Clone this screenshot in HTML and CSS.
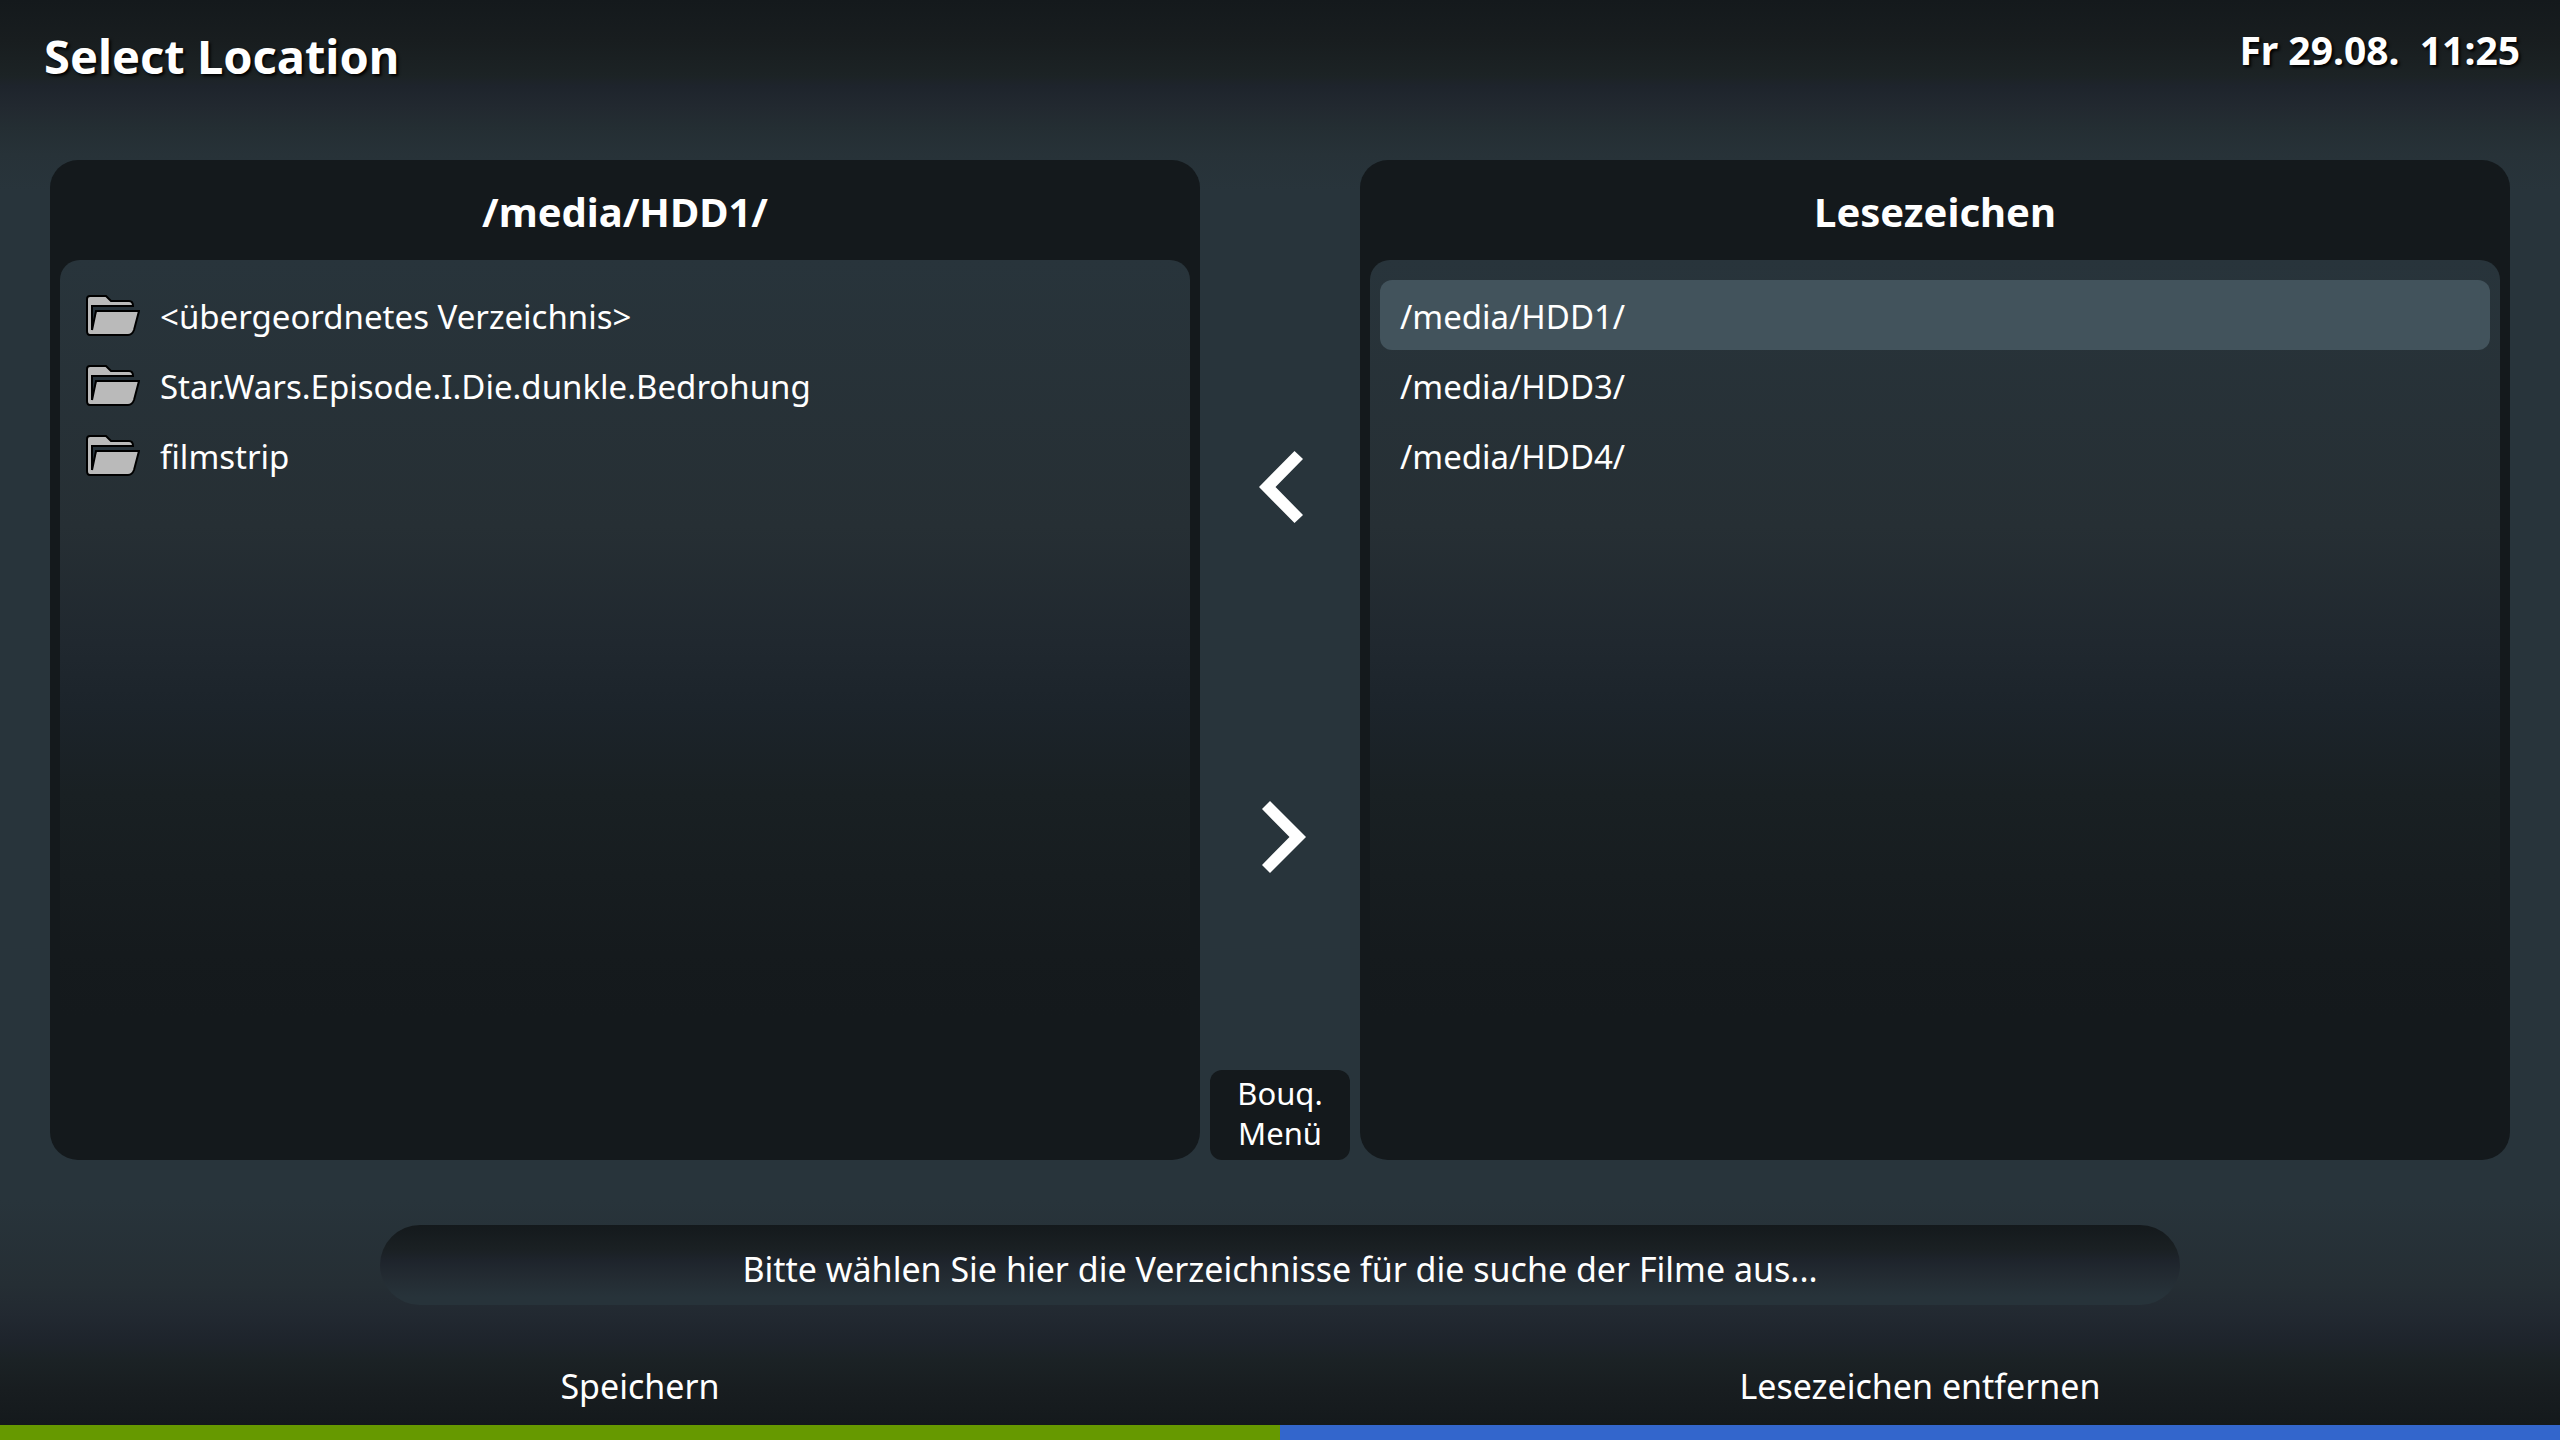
FILE: index.html
```html
<!DOCTYPE html>
<html lang="de">
<head>
<meta charset="utf-8">
<title>Select Location</title>
<link rel="stylesheet" href="styles.css">
</head>
<body>
<svg class="sprite" aria-hidden="true">
  <symbol id="folder" viewBox="0 0 54 42">
    <path d="M1 4Q1 1 4 1H20L25 6H43Q47 6 47 11H6V35L10 16H53L48 35Q46 40 42 40H4Q1 40 1 36Z" fill="#bababa"/>
    <path d="M6 11H47V15H11L6 34Z" fill="#26323a"/>
    <path d="M6 35V11H47Q47 6 43 6H25L20 1H4Q1 1 1 4V36Q1 40 4 40H42Q46 40 48 35L53 16H10L6 35" fill="none" stroke="#000" stroke-width="2"/>
  </symbol>
</svg>
<header class="topbar">
  <h1 class="title">Select Location</h1>
  <time class="clock" datetime="08-29T11:25">Fr 29.08.&nbsp; 11:25</time>
</header>
<main class="browser">
  <section class="panel">
    <h2 class="panel-title">/media/HDD1/</h2>
    <ul class="list">
      <li><button class="row" type="button"><svg class="folder"><use href="#folder"/></svg>&lt;übergeordnetes Verzeichnis&gt;</button></li>
      <li><button class="row" type="button"><svg class="folder"><use href="#folder"/></svg>Star.Wars.Episode.I.Die.dunkle.Bedrohung</button></li>
      <li><button class="row" type="button"><svg class="folder"><use href="#folder"/></svg>filmstrip</button></li>
    </ul>
  </section>
  <nav class="switcher">
    <button class="arrow" type="button" aria-label="Links"><svg class="chevron" viewBox="0 0 48 72"><path d="M38.500 0L3 36L38.500 72L47 64L19.500 36L47 8Z"/></svg></button>
    <button class="arrow" type="button" aria-label="Rechts"><svg class="chevron" viewBox="0 0 48 72"><path d="M14 0L50 36L14 72L6 64L33.500 36L6 8Z"/></svg></button>
    <button class="menu" type="button">Bouq.<br>Menü</button>
  </nav>
  <section class="panel">
    <h2 class="panel-title">Lesezeichen</h2>
    <ul class="list">
      <li><button class="row selected" type="button">/media/HDD1/</button></li>
      <li><button class="row" type="button">/media/HDD3/</button></li>
      <li><button class="row" type="button">/media/HDD4/</button></li>
    </ul>
  </section>
</main>
<p class="hint">Bitte wählen Sie hier die Verzeichnisse für die suche der Filme aus...</p>
<footer class="actions">
  <button class="action green" type="button">Speichern</button>
  <button class="action blue" type="button">Lesezeichen entfernen</button>
</footer>
</body>
</html>
```
FILE: styles.css
```css
* { box-sizing: border-box; }
body {
  margin: 0;
  min-height: 100vh;
  display: flex;
  flex-direction: column;
  color: #fff;
  font: 34px/48px "Noto Sans", "Open Sans", sans-serif;
  background:
    linear-gradient(#14191c 0, #181d1f 40px, #1c2325 76px, #1e242c 86px, #222930 108px, #242e33 128px, #273238 155px, #28343b 190px, transparent 190px),
    linear-gradient(to top, #14191c 15px, #181d20 50px, #1b2225 80px, #1e242c 100px, #222931 125px, #252e34 155px, #28343b 240px);
}
.sprite { position: absolute; width: 0; height: 0; }
button { font: inherit; color: inherit; border: 0; padding: 0; background: none; }
.topbar {
  height: 160px;
  padding: 20px 40px 0 44px;
  display: flex;
  justify-content: space-between;
  align-items: flex-start;
  text-shadow: 2px 2px 3px #000;
}
.title { margin: 0; font-size: 47px; line-height: 72px; font-weight: 700; }
.clock { font-size: 39px; line-height: 60px; font-weight: 700; }
.browser { flex: 1; display: flex; padding: 0 50px; }
.panel {
  flex: 1;
  display: flex;
  flex-direction: column;
  padding: 0 10px 10px;
  border-radius: 28px;
  background: #14191c;
}
.panel-title { margin: 0; font-size: 40px; line-height: 100px; padding-top: 2px; height: 100px; text-align: center; font-weight: 700; }
.list {
  flex: 1;
  margin: 0;
  padding: 20px 10px;
  list-style: none;
  border-radius: 20px;
  background: linear-gradient(#28343b, #262f34 30%, #20282f 43%, #1c242b 50%, #192023 60%, #151a1d 78%, #14191c 85%);
}
.row {
  display: flex;
  align-items: center;
  width: 100%;
  height: 70px;
  padding: 4px 20px 0;
  font-size: 33px;
  text-align: left;
  border-radius: 12px;
}
.row:has(.folder) { padding-left: 16px; gap: 20px; }
.selected { background: #42535c; }
.folder { width: 54px; height: 42px; margin-bottom: 2px; }
.switcher { width: 160px; display: flex; flex-direction: column; align-items: center; justify-content: flex-end; }
.arrow { height: 350px; display: flex; align-items: center; }
.chevron { width: 48px; height: 72px; fill: #fff; overflow: visible; }
.menu { width: 140px; height: 90px; margin-top: 58px; padding-bottom: 4px; font-size: 31px; line-height: 40px; border-radius: 12px; background: #14191c; }
.hint {
  width: 1800px;
  max-width: 90%;
  height: 80px;
  margin: 65px auto 30px;
  padding-top: 8px;
  line-height: 72px;
  text-align: center;
  border-radius: 40px;
  background: linear-gradient(#14191c, #1a2023 30%, #1e242c 45%, #232b32 65%, #27333a 90%);
}
.actions { display: flex; }
.action { flex: 1; height: 105px; padding-top: 12px; border-bottom: 15px solid; }
.green { border-color: #690; }
.blue { border-color: #36c; }
```
